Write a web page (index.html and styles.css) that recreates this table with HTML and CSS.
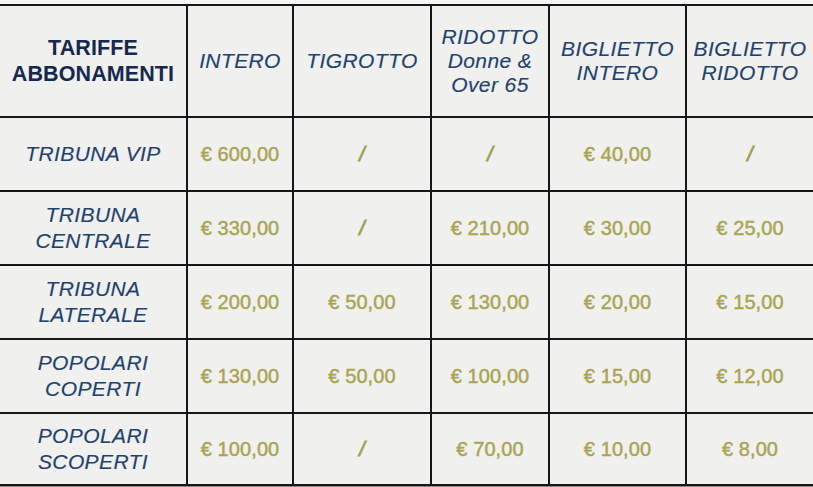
FILE: index.html
```html
<!DOCTYPE html>
<html lang="it">
<head>
<meta charset="utf-8">
<title>Tariffe abbonamenti</title>
<link rel="stylesheet" href="styles.css">
</head>
<body>
<div class="sheet">
  <div class="grid">
    <div class="cell head title">TARIFFE<br>ABBONAMENTI</div>
    <div class="cell head">INTERO</div>
    <div class="cell head">TIGROTTO</div>
    <div class="cell head">RIDOTTO<br>Donne &amp;<br>Over 65</div>
    <div class="cell head">BIGLIETTO<br>INTERO</div>
    <div class="cell head">BIGLIETTO<br>RIDOTTO</div>

    <div class="cell label">TRIBUNA VIP</div>
    <div class="cell price">€ 600,00</div>
    <div class="cell price slash">/</div>
    <div class="cell price slash">/</div>
    <div class="cell price">€ 40,00</div>
    <div class="cell price slash">/</div>

    <div class="cell label">TRIBUNA<br>CENTRALE</div>
    <div class="cell price">€ 330,00</div>
    <div class="cell price slash">/</div>
    <div class="cell price">€ 210,00</div>
    <div class="cell price">€ 30,00</div>
    <div class="cell price">€ 25,00</div>

    <div class="cell label">TRIBUNA<br>LATERALE</div>
    <div class="cell price">€ 200,00</div>
    <div class="cell price">€ 50,00</div>
    <div class="cell price">€ 130,00</div>
    <div class="cell price">€ 20,00</div>
    <div class="cell price">€ 15,00</div>

    <div class="cell label">POPOLARI<br>COPERTI</div>
    <div class="cell price">€ 130,00</div>
    <div class="cell price">€ 50,00</div>
    <div class="cell price">€ 100,00</div>
    <div class="cell price">€ 15,00</div>
    <div class="cell price">€ 12,00</div>

    <div class="cell label">POPOLARI<br>SCOPERTI</div>
    <div class="cell price">€ 100,00</div>
    <div class="cell price slash">/</div>
    <div class="cell price">€ 70,00</div>
    <div class="cell price">€ 10,00</div>
    <div class="cell price">€ 8,00</div>
  </div>
  <div class="shadow"></div>
</div>
</body>
</html>
```

FILE: styles.css
```css
html, body {
  margin: 0;
  padding: 0;
  background: #f5f5f4;
}
body {
  width: 813px;
  height: 487px;
  overflow: hidden;
  font-family: "Liberation Sans", Arial, sans-serif;
}
.sheet {
  padding-top: 4px;
}
.grid {
  display: grid;
  grid-template-columns: 186px 104px 136px 116px 135px 126px;
  grid-template-rows: 110px 72px 72px 72px 72px 70px;
  gap: 2px;
  padding: 2px 0;
  background: #161616;
}
.cell {
  background: #f0f0ee;
  display: flex;
  align-items: center;
  justify-content: center;
  text-align: center;
}
.head {
  font-style: italic;
  font-size: 21px;
  line-height: 24px;
  letter-spacing: 0.4px;
  color: #1d4272;
  -webkit-text-stroke: 0.15px #1d4272;
  padding-bottom: 1px;
}
.title {
  font-style: normal;
  font-weight: bold;
  font-size: 21.5px;
  line-height: 26px;
  letter-spacing: 0.1px;
  color: #15284f;
  -webkit-text-stroke: 0;
}
.label {
  font-style: italic;
  font-size: 21px;
  line-height: 26px;
  letter-spacing: 0.4px;
  color: #1d4272;
  -webkit-text-stroke: 0.15px #1d4272;
}
.price {
  font-size: 20px;
  color: #aaa552;
  letter-spacing: 0.1px;
  -webkit-text-stroke: 0.45px #aaa552;
}
.slash {
  font-style: italic;
  color: #a2a24f;
  -webkit-text-stroke: 0.8px #a2a24f;
}
.shadow {
  height: 1px;
  background: #8a8a88;
}
```
